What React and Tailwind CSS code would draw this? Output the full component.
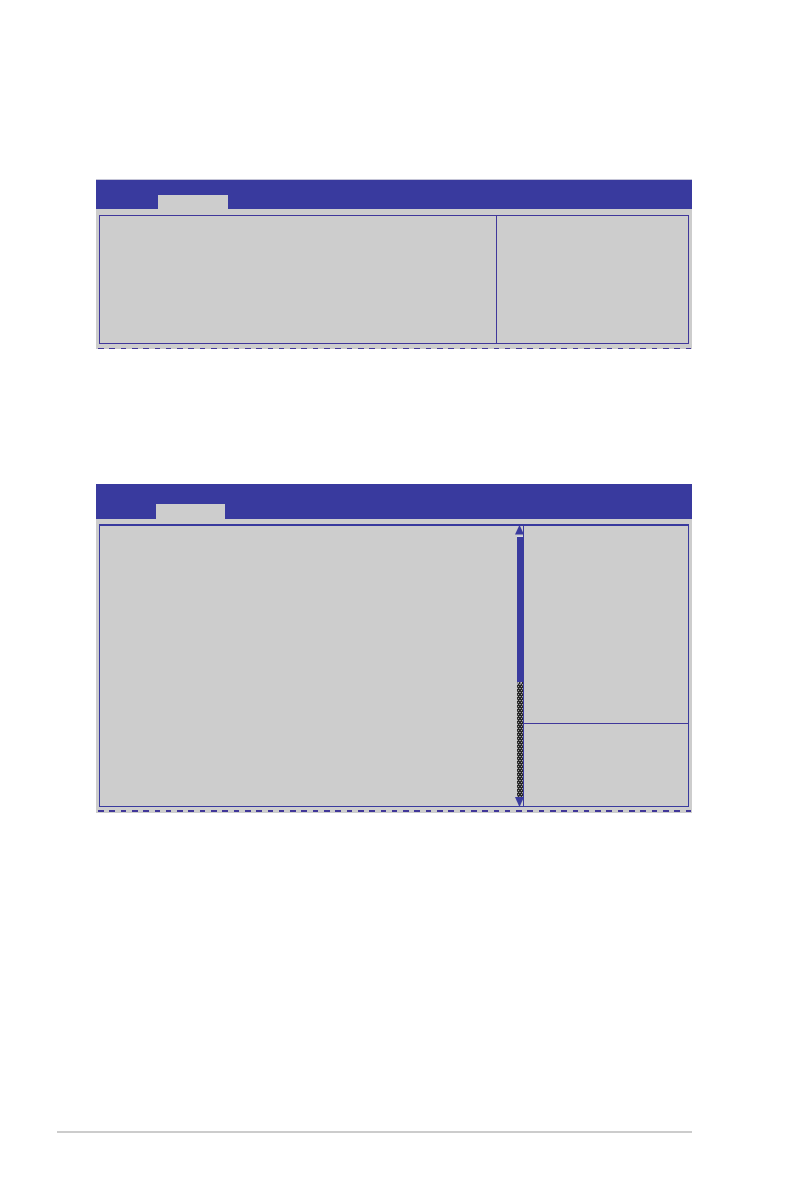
function DashedRule({ thickness }) {
  return (
    <svg className="ml-0.5 block h-0.5 w-[calc(100%-2px)]" aria-hidden="true" shapeRendering="crispEdges">
      <line x1="0" x2="100%" y1={thickness / 2} y2={thickness / 2} stroke="#413799" strokeWidth={thickness} strokeDasharray="5.6 5.7" />
    </svg>
  );
}

function Arrow({ down = false }) {
  return (
    <svg className="-ml-0.5 block h-[9px] w-[9px] shrink-0" viewBox="0 0 9 9" aria-hidden="true">
      <path d={down ? "M0 0H9L5 9H4Z" : "M4 0H5L9 8.5H0Z"} fill="#393a9e" />
    </svg>
  );
}

function ScrollTrack() {
  return (
    <div className="flex w-[7px] shrink-0 flex-col">
      <Arrow />
      <div className="mt-px h-px bg-[#d3d9e8]" />
      <div className="h-[145px] bg-[#393a9e]" />
      <svg className="block min-h-0 w-full flex-1" aria-hidden="true">
        <defs>
          <pattern id="track-weave" width="6" height="4" patternUnits="userSpaceOnUse">
            <rect width="6" height="4" fill="#262626" />
            <rect x="1" width="1" height="1" fill="#a8a8a8" />
            <rect x="4" width="1" height="1" fill="#a8a8a8" />
            <rect y="2" width="1" height="1" fill="#a8a8a8" />
            <rect x="5" y="2" width="1" height="1" fill="#a8a8a8" />
            <rect x="2" y="2" width="2" height="1" fill="#8a8a8a" />
            <rect y="1" width="1" height="1" fill="#505050" />
            <rect x="5" y="3" width="1" height="1" fill="#505050" />
          </pattern>
        </defs>
        <rect width="6" height="100%" fill="url(#track-weave)" />
        <path d="M0 1H6" stroke="#d5d5df" strokeWidth="1" strokeDasharray="2 1" />
      </svg>
      <Arrow down />
    </div>
  );
}

export default function App() {
  return (
    <div className="min-h-screen bg-white pt-[179px] font-['Liberation_Sans',sans-serif]">
      <main className="ml-24 mr-[102px]">
        <section className="bg-[#cdcdcd]" aria-label="Menu panel">
          <nav className="flex h-[30px] items-end border-t border-[#c5c5d7] bg-[#393a9e] pl-[62px]">
            <button type="button" aria-label="Selected menu" className="h-3.5 w-[70px] bg-[#cdcdcd]" />
          </nav>
          <div className="px-[3px] pb-1 pt-1.5">
            <div className="flex h-[129px] border border-[#40379b]">
              <div className="flex-1" />
              <aside className="w-[192px] border-l border-[#40379b]" />
            </div>
          </div>
          <div className="h-px overflow-hidden">
            <DashedRule thickness={1} />
          </div>
        </section>

        <section className="mt-[135px] bg-[#cdcdcd] pb-px" aria-label="Scrolling menu panel">
          <nav className="flex h-[35px] items-end bg-[#393a9e] pl-[60px]">
            <button type="button" aria-label="Selected menu" className="h-[15px] w-[69px] bg-[#cdcdcd]" />
          </nav>
          <div className="px-[3px] pb-[3px] pt-[5px]">
            <div className="flex h-[283px] border border-t-2 border-[#393a9e]">
              <div className="flex-1" />
              <ScrollTrack />
              <aside className="-ml-px flex w-[165px] flex-col border-l border-[#393a9e]">
                <div className="h-[197px]" />
                <div className="flex-1 border-t border-[#40379b]" />
              </aside>
            </div>
          </div>
          <DashedRule thickness={2} />
        </section>
      </main>
      <footer className="ml-[57px] mr-[102px] mt-[318px]">
        <hr className="border-t-2 border-[#cccccc]" />
      </footer>
    </div>
  );
}
